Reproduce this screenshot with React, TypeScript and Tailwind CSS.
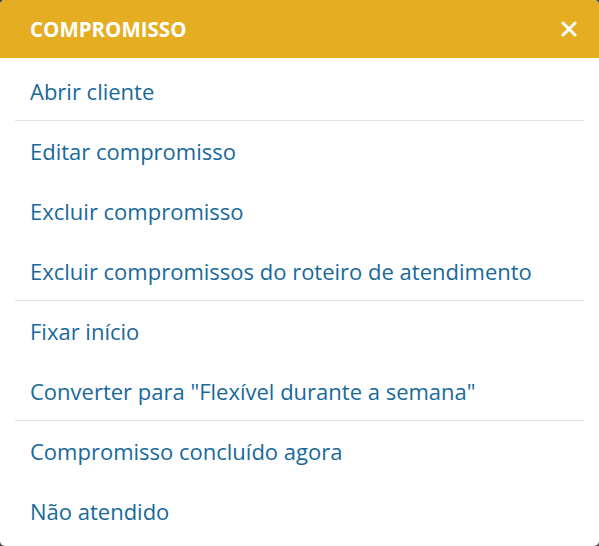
import React from "react";

type Item = { label: string; divider?: boolean };

const items: Item[] = [
  { label: "Abrir cliente", divider: true },
  { label: "Editar compromisso" },
  { label: "Excluir compromisso" },
  { label: "Excluir compromissos do roteiro de atendimento", divider: true },
  { label: "Fixar início" },
  { label: 'Converter para "Flexível durante a semana"', divider: true },
  { label: "Compromisso concluído agora" },
  { label: "Não atendido" },
];

export default function App() {
  return (
    <div className="min-h-screen bg-[#4a4a4a]" style={{ fontFamily: '"Open Sans", "Noto Sans", sans-serif' }}>
      <div className="w-[599px] h-[546px] bg-white rounded-[5px] overflow-hidden">
        {/* header */}
        <div className="h-[58px] bg-[#e5ae22] flex items-center justify-between pl-[30px] pr-[20px]">
          <h2 className="text-white font-bold text-[20.5px]">COMPROMISSO</h2>
          <button className="w-[20px] h-[20px] flex items-center justify-center">
            <svg width="16" height="16" viewBox="0 0 16 16">
              <path d="M2 2 L14 14 M14 2 L2 14" stroke="white" strokeWidth="3" strokeLinecap="round" />
            </svg>
          </button>
        </div>

        <ul className="pt-[4px]">
          {items.map((it) => (
            <li key={it.label} className="mx-[15px]">
              <div className="h-[58px] flex items-center px-[15px] text-[22px] text-[#17699b]">
                {it.label}
              </div>
              <div className={it.divider ? "h-px bg-[#e3e3e3]" : "h-px"} />
              <div className="h-px" />
            </li>
          ))}
        </ul>
      </div>
    </div>
  );
}
